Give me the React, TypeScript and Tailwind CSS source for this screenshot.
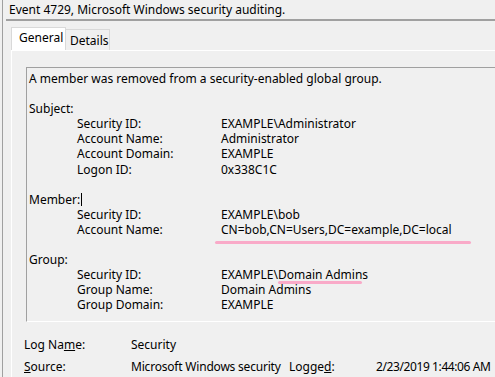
import React from 'react';

interface Field {
  label: string;
  value: string;
  mark?: string;
}

interface Section {
  title: string;
  caret?: boolean;
  fields: Field[];
}

export default function App() {
  const sections: Section[] = [
    {
      title: 'Subject:',
      fields: [
        { label: 'Security ID:', value: 'EXAMPLE\\Administrator' },
        { label: 'Account Name:', value: 'Administrator' },
        { label: 'Account Domain:', value: 'EXAMPLE' },
        { label: 'Logon ID:', value: '0x338C1C' }
      ]
    },
    {
      title: 'Member:',
      caret: true,
      fields: [
        { label: 'Security ID:', value: 'EXAMPLE\\bob' },
        {
          label: 'Account Name:',
          value: 'CN=bob,CN=Users,DC=example,DC=local',
          mark: 'left-[-6px] top-[19px] w-[256px]'
        }
      ]
    },
    {
      title: 'Group:',
      fields: [
        {
          label: 'Security ID:',
          value: 'EXAMPLE\\Domain Admins',
          mark: 'left-[57px] top-[14px] w-[84px]'
        },
        { label: 'Group Name:', value: 'Domain Admins' },
        { label: 'Group Domain:', value: 'EXAMPLE' }
      ]
    }
  ];

  return (
    <div
      className="flex h-[377px] w-[495px] overflow-hidden bg-[#f0f0f0] text-[12px] text-black"
      style={{ fontFamily: '"Segoe UI", "Noto Sans", Arial, sans-serif' }}
    >
      <div className="w-[2px] shrink-0" />
      <div className="w-px shrink-0 bg-[#a0a0a0]" />
      <div className="flex min-w-0 flex-1 flex-col">
        <div className="flex h-[18px] items-center whitespace-nowrap pl-[6px] pt-[2px]">
          Event 4729, Microsoft Windows security auditing.
        </div>
        <div className="ml-[3px] mt-[1px] h-[2px] bg-[#a0a0a0]" />

        <div className="ml-[8px] mt-[6px] flex items-end">
          <div className="flex h-[23px] w-[55px] items-center border-x border-t border-[#d9d9d9] bg-white pb-[2px] pl-[7px]">
            General
          </div>
          <div className="flex h-[21px] w-[44px] items-center border-r border-t border-[#d9d9d9] pl-[4px] pt-[1px]">
            Details
          </div>
        </div>

        <div className="ml-[8px] flex flex-1 flex-col border-l border-t border-white">
          <div className="pl-[14px] pt-[16px]">
            <div className="h-[255px] w-[480px] border-b border-l border-t border-b-white border-l-[#a0a0a0] border-t-[#a0a0a0] pl-[2px] pt-[3px] leading-[15.1px]">
              <div>A member was removed from a security-enabled global group.</div>
              {sections.map((s) => (
                <div key={s.title} className="pt-[15.1px]">
                  <div className="flex h-[15.1px] items-center">
                    {s.title}
                    {s.caret && <span className="ml-[1px] inline-block h-[13px] w-px bg-black" />}
                  </div>
                  {s.fields.map((f) => (
                    <div key={f.label} className="flex h-[15.1px] whitespace-nowrap pl-[48px]">
                      <div className="w-[144px] shrink-0">{f.label}</div>
                      <div className="relative">
                        {f.value}
                        {f.mark && (
                          <span className={`absolute h-[3px] rounded-full bg-[#f9aac8] ${f.mark}`} />
                        )}
                      </div>
                    </div>
                  ))}
                </div>
              ))}
            </div>
          </div>

          <div className="mt-[15px] grid grid-cols-[107px_158px_87px_1fr] gap-y-[7px] whitespace-nowrap pl-[12px] leading-[15px]">
            <div>
              Log Na<span className="underline">m</span>e:
            </div>
            <div>Security</div>
            <div />
            <div />
            <div>
              <span className="underline">S</span>ource:
            </div>
            <div className="tracking-[-0.2px]">Microsoft Windows security</div>
            <div>
              Logge<span className="underline">d</span>:
            </div>
            <div className="tracking-[-0.4px]">2/23/2019 1:44:06 AM</div>
          </div>
        </div>
      </div>
    </div>
  );
}
